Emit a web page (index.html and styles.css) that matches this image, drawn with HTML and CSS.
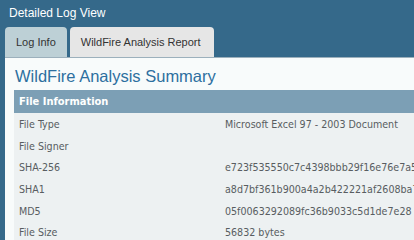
FILE: index.html
```html
<!DOCTYPE html>
<html>
<head>
<meta charset="utf-8">
<link rel="stylesheet" href="styles.css">
</head>
<body>
<div class="window">
  <div class="title">Detailed Log View</div>
  <div class="tabs">
    <div class="tab">Log Info</div>
    <div class="tab active">WildFire Analysis Report</div>
  </div>
  <div class="panel">
    <h1 class="summary">WildFire Analysis Summary</h1>
    <div class="section">
      <div class="section-head">File Information</div>
      <div class="row"><span class="label">File Type</span><span class="value">Microsoft Excel 97 - 2003 Document</span></div>
      <div class="row"><span class="label">File Signer</span><span class="value"></span></div>
      <div class="row"><span class="label">SHA-256</span><span class="value">e723f535550c7c4398bbb29f16e76e7a5</span></div>
      <div class="row"><span class="label">SHA1</span><span class="value">a8d7bf361b900a4a2b422221af2608ba7</span></div>
      <div class="row"><span class="label">MD5</span><span class="value">05f0063292089fc36b9033c5d1de7e28</span></div>
      <div class="row"><span class="label">File Size</span><span class="value">56832 bytes</span></div>
    </div>
  </div>
</div>
</body>
</html>
```
FILE: styles.css
```css
html, body {
  margin: 0;
  padding: 0;
}
body {
  width: 414px;
  height: 240px;
  overflow: hidden;
  background: #35698a;
}
.window {
  display: flex;
  flex-direction: column;
}
.title {
  height: 27px;
  box-sizing: border-box;
  padding: 6px 0 0 9px;
  font-family: "Liberation Sans", Arial, sans-serif;
  font-size: 12px;
  line-height: 15px;
  color: #ffffff;
}
.tabs {
  display: flex;
  gap: 3px;
  padding-left: 5px;
  height: 30px;
}
.tab {
  padding: 0 11px;
  border-radius: 4px 4px 0 0;
  background: #bdd0d6;
  color: #333333;
  font-family: "Liberation Sans", Arial, sans-serif;
  font-size: 11px;
  line-height: 31px;
}
.tab.active {
  background: #e6e6e6;
  padding: 0 13px 0 11px;
}
.panel {
  margin-left: 5px;
  background: #f8fbfb;
  border-top: 1px solid #9cb0bc;
  padding: 0 0 40px 9px;
  white-space: nowrap;
}
.summary {
  margin: 0;
  padding: 8px 0 0 1px;
  height: 32px;
  box-sizing: border-box;
  font-family: "Liberation Sans", Arial, sans-serif;
  font-weight: normal;
  font-size: 16.5px;
  line-height: 20px;
  color: #2d6f9f;
}
.section {
  display: flex;
  flex-direction: column;
  background: #edf1f2;
  overflow: hidden;
}
.section-head {
  height: 23px;
  padding-left: 5px;
  background: #7c9fb5;
  color: #ffffff;
  font-family: "DejaVu Sans Condensed", "DejaVu Sans", sans-serif;
  font-stretch: condensed;
  font-weight: bold;
  font-size: 11px;
  line-height: 24px;
}
.row {
  display: flex;
  height: 20.7px;
  padding-top: 1px;
  font-family: "DejaVu Sans Condensed", "DejaVu Sans", sans-serif;
  font-stretch: condensed;
  font-size: 10.6px;
  line-height: 20px;
  color: #585d61;
}
.row:first-of-type {
  padding-top: 2px;
}
.label {
  width: 206px;
  padding-left: 5px;
  flex: none;
}
.value {
  flex: none;
}
```
